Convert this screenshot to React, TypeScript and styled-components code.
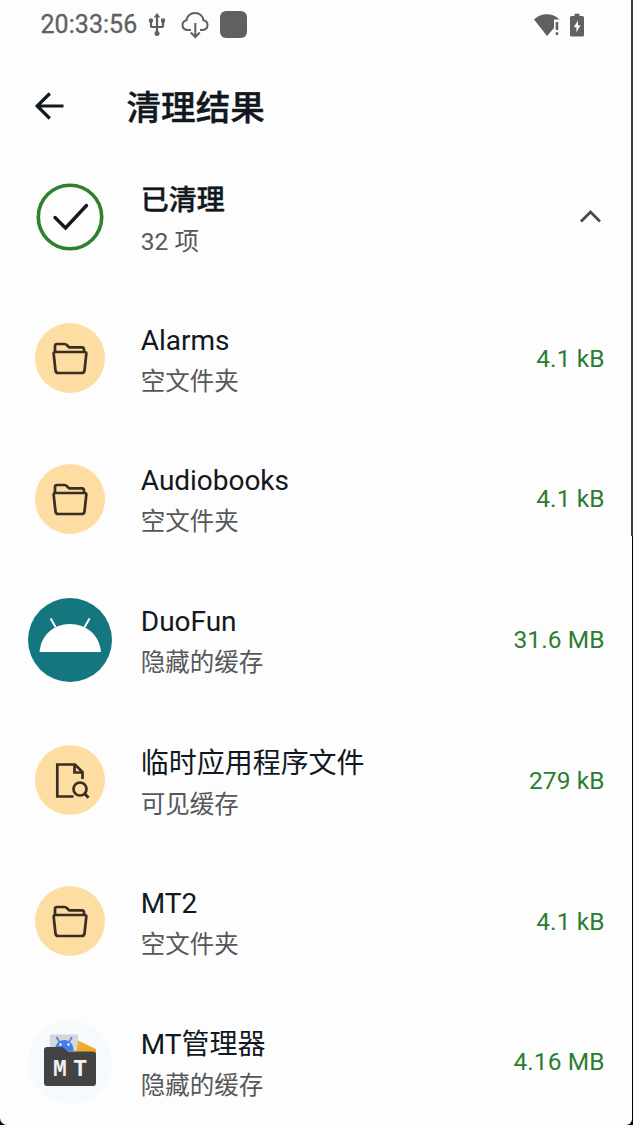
import React from "react";
import styled, { createGlobalStyle } from "styled-components";

const GlobalStyle = createGlobalStyle`
  *, *::before, *::after { box-sizing: border-box; }
  html, body { margin: 0; padding: 0; background: #000; overflow: hidden; }
  svg { display: block; flex: none; }
`;

const Bezel = styled.div`
  height: 1125px;
  padding-right: 1px;
  background: linear-gradient(#3b3b3b 0 536px, #000 536px);
  font-family: Roboto, "Noto Sans CJK SC", sans-serif;
`;

const Screen = styled.main`
  height: 1125px;
  background: linear-gradient(#3b3b3b, #3b3b3b) right top / 1px 536px no-repeat #fdfdfd;
  border-radius: 0 0 6px 7px;
  overflow: hidden;
  color: #111820;
`;

const StatusBar = styled.header`
  display: flex;
  align-items: center;
  justify-content: space-between;
  height: 49px;
  padding: 0 48.5px 0 40.5px;
  color: #606060;
`;

const StatusGroup = styled.div`
  display: flex;
  align-items: center;
`;

const Clock = styled.time`
  width: 107px;
  font-size: 25px;
  line-height: 30px;
  letter-spacing: 0.05px;
  -webkit-text-stroke: 0.3px currentColor;
`;

const AppBar = styled.div`
  display: flex;
  align-items: center;
  height: 98px;
  padding: 15px 0 0 34px;
`;

const PageTitle = styled.h1`
  margin: 4px 0 0 61.5px;
  font-size: 34.6px;
  line-height: 44px;
  font-weight: 500;
  -webkit-text-stroke: 0.4px currentColor;
`;

const List = styled.ul`
  margin: 0;
  padding: 0;
  list-style: none;
`;

const Row = styled.li`
  display: flex;
  align-items: center;
  height: 140.75px;
  padding: 0 27.5px 0 28px;
`;

const IconSlot = styled.div`
  display: flex;
  align-items: center;
  justify-content: center;
  width: 84.5px;
  height: 84px;
  margin-right: 28.3px;
`;

const Texts = styled.div`
  flex: 1;
  padding-top: 6px;
`;

const Name = styled.div<{ $strong?: boolean; $cjk?: boolean }>`
  font-size: 28px;
  line-height: 41px;
  letter-spacing: -0.03px;
  padding-top: ${(p) => (p.$cjk ? 2 : 0)}px;
  font-weight: ${(p) => (p.$strong ? 500 : 400)};
  -webkit-text-stroke: ${(p) => (p.$strong ? 0.4 : 0)}px currentColor;
`;

const Detail = styled.div`
  font-size: 24.5px;
  line-height: 42px;
  color: #55585b;
`;

const Size = styled.div`
  padding-top: 1px;
  font-size: 24.5px;
  line-height: 32px;
  letter-spacing: 0.08px;
  color: #2c7d32;
`;

const UsbIcon = () => (
  <svg width="18" height="24" viewBox="0 0 18 24" fill="none" stroke="currentColor" strokeWidth="2.200">
    <path d="M9 3v17M3 8v4.5q0 1.5 1.5 1.5H13.5q1.5 0 1.5-1.5V8" />
    <path d="M9 0l3.3 4.6H5.700z" fill="currentColor" stroke="none" />
    <circle cx="9" cy="20.500" r="2.500" fill="currentColor" stroke="none" />
    <circle cx="3" cy="7.500" r="2.200" fill="currentColor" stroke="none" />
    <path d="M13 5.500h4v4h-4z" fill="currentColor" stroke="none" />
  </svg>
);

const CloudSlot = styled.div`
  margin-left: 15.5px;
`;

const CloudIcon = () => (
  <svg width="28" height="28" viewBox="0 0 28 28" fill="none" stroke="currentColor" strokeWidth="2">
    <path d="M10 19H7.500C3.800 19 1.500 17 1.500 14C1.500 11.500 3 9.700 5.600 9.200C6 5 9.500 2 14 2S22 5 22.400 9.200C25 9.700 26.500 11.500 26.500 14C26.500 17 24.200 19 20.500 19H19" />
    <path d="M14.300 12v14M9.800 21.500l4.500 4.500l4.500-4.500" />
  </svg>
);

const AppBlock = styled.div`
  width: 27px;
  height: 27px;
  margin-left: 11px;
  border-radius: 6px;
  background: #606060;
`;

const WifiIcon = () => (
  <svg width="26" height="24" viewBox="0 0 26 24" fill="currentColor">
    <path d="M0 6.500C7-.5 19-.5 25.500 6.500H20V15L13 23z" />
    <path d="M21.700 9h2.500v8h-2.500zM21.700 19.300h2.500v2.800h-2.500z" />
  </svg>
);

const BatterySlot = styled.div`
  margin-left: 10px;
`;

const BatteryIcon = () => (
  <svg width="14" height="24" viewBox="0 0 14 24">
    <path d="M1.500 3H4.500V.8H9.500V3H12.500Q14 3 14 4.500V22Q14 23.500 12.500 23.500H1.500Q0 23.500 0 22V4.500Q0 3 1.500 3z" fill="currentColor" />
    <path d="M8 7.500L3.700 14.300H6.400V19.500L10.500 12.300H8z" fill="#fdfdfd" />
  </svg>
);

const BackIcon = () => (
  <svg width="31" height="30" viewBox="0 0 31 30" fill="none" stroke="currentColor" strokeWidth="3.200">
    <path d="M29.500 15H4M15.800 2.500L3.200 15L15.800 27.500" />
  </svg>
);

const CheckIcon = () => (
  <svg width="70" height="70" viewBox="0 0 70 70" fill="none">
    <circle cx="35" cy="35" r="31.700" stroke="#2d822f" strokeWidth="3.600" />
    <path d="M20 35.500L30.500 46L51.500 23.500" stroke="#15181c" strokeWidth="3.400" strokeLinecap="round" />
  </svg>
);

const ChevronUp = () => (
  <svg width="28" height="20" viewBox="0 0 28 20" fill="none" stroke="#494949" strokeWidth="2.700">
    <path d="M4 14.500L13.500 5L23 14.500" />
  </svg>
);

const FolderIcon = () => (
  <svg width="70" height="70" viewBox="0 0 70 70" fill="none" stroke="#382e23" strokeWidth="2.700" strokeLinejoin="round">
    <circle cx="35" cy="35" r="35" fill="#fedda2" stroke="none" />
    <path d="M20 29V23Q20 21 22 21H29.500Q31 21 32 22.300L34 24.300H47Q49 24.300 49 26.500V29" />
    <path d="M20.500 29H49.500Q51.500 29 51.300 31L49.500 47.500Q49.200 50 46.700 50H23.300Q20.800 50 20.500 47.500L18.700 31Q18.500 29 20.500 29z" />
  </svg>
);

const FileSearchIcon = () => (
  <svg width="70" height="70" viewBox="0 0 70 70" fill="none" stroke="#382e23" strokeWidth="2.700">
    <circle cx="35" cy="35" r="35" fill="#fedda2" stroke="none" />
    <path d="M38.500 51.500H22.300V19.500H40L47.500 27V34M39.500 19.500V27.500H47.500" />
    <circle cx="45" cy="44" r="6.500" />
    <path d="M49.500 48.500L53.500 52.800" strokeWidth="3" />
  </svg>
);

const DroidIcon = () => (
  <svg width="84" height="84" viewBox="0 0 84 84">
    <circle cx="42" cy="42" r="42" fill="#14767f" />
    <path d="M11.500 54C13 37 25.500 26 42 26S71.500 37 73 54z" fill="#fff" />
    <path d="M22.700 20.500L27.500 29M61.500 20.500L56.700 29" stroke="#fff" strokeWidth="2" />
  </svg>
);

const ManagerIcon = () => (
  <svg width="84" height="84" viewBox="0 0 84 84">
    <circle cx="42" cy="42" r="42" fill="#f7fafc" />
    <path d="M22 14.500H50V36H22z" fill="#d4d7da" />
    <path d="M50 20.500L68 29V36H48z" fill="#f2aa2c" />
    <path d="M27 31C27 23.500 31 20 36.300 20S45.500 23.500 45.500 31z" fill="#467ee8" />
    <path d="M28.500 17L31.500 22M44 17L41 22" stroke="#467ee8" strokeWidth="1.600" />
    <circle cx="32.500" cy="24.500" r="1.200" fill="#fff" />
    <circle cx="40.500" cy="24.500" r="1.200" fill="#fff" />
    <path d="M19 27H33.500Q35.500 27 37 29Q38.500 31.500 41 31.500H65Q68 31.500 68 34.500V63Q68 66 65 66H19Q16 66 16 63V30Q16 27 19 27z" fill="#434343" />
    <text x="25" y="56.300" fill="#f1f1f1" fontFamily="Liberation Mono" fontSize="23" fontWeight="700" textLength="34" lengthAdjust="spacing">MT</text>
  </svg>
);

interface Entry {
  name: string;
  detail: string;
  size: string;
  icon: React.ReactNode;
  cjk?: boolean;
}

const entries: Entry[] = [
  { name: "Alarms", detail: "空文件夹", size: "4.1 kB", icon: <FolderIcon /> },
  { name: "Audiobooks", detail: "空文件夹", size: "4.1 kB", icon: <FolderIcon /> },
  { name: "DuoFun", detail: "隐藏的缓存", size: "31.6 MB", icon: <DroidIcon /> },
  { name: "临时应用程序文件", detail: "可见缓存", size: "279 kB", icon: <FileSearchIcon />, cjk: true },
  { name: "MT2", detail: "空文件夹", size: "4.1 kB", icon: <FolderIcon /> },
  { name: "MT管理器", detail: "隐藏的缓存", size: "4.16 MB", icon: <ManagerIcon />, cjk: true },
];

export default function App() {
  return (
    <Bezel>
      <GlobalStyle />
      <Screen>
        <StatusBar>
          <StatusGroup>
            <Clock>20:33:56</Clock>
            <UsbIcon />
            <CloudSlot>
              <CloudIcon />
            </CloudSlot>
            <AppBlock />
          </StatusGroup>
          <StatusGroup>
            <WifiIcon />
            <BatterySlot>
              <BatteryIcon />
            </BatterySlot>
          </StatusGroup>
        </StatusBar>
        <AppBar>
          <BackIcon />
          <PageTitle>清理结果</PageTitle>
        </AppBar>
        <List>
          <Row>
            <IconSlot>
              <CheckIcon />
            </IconSlot>
            <Texts>
              <Name $strong $cjk>已清理</Name>
              <Detail>32 项</Detail>
            </Texts>
            <ChevronUp />
          </Row>
          {entries.map((e) => (
            <Row key={e.name}>
              <IconSlot>{e.icon}</IconSlot>
              <Texts>
                <Name $cjk={e.cjk}>{e.name}</Name>
                <Detail>{e.detail}</Detail>
              </Texts>
              <Size>{e.size}</Size>
            </Row>
          ))}
        </List>
      </Screen>
    </Bezel>
  );
}
